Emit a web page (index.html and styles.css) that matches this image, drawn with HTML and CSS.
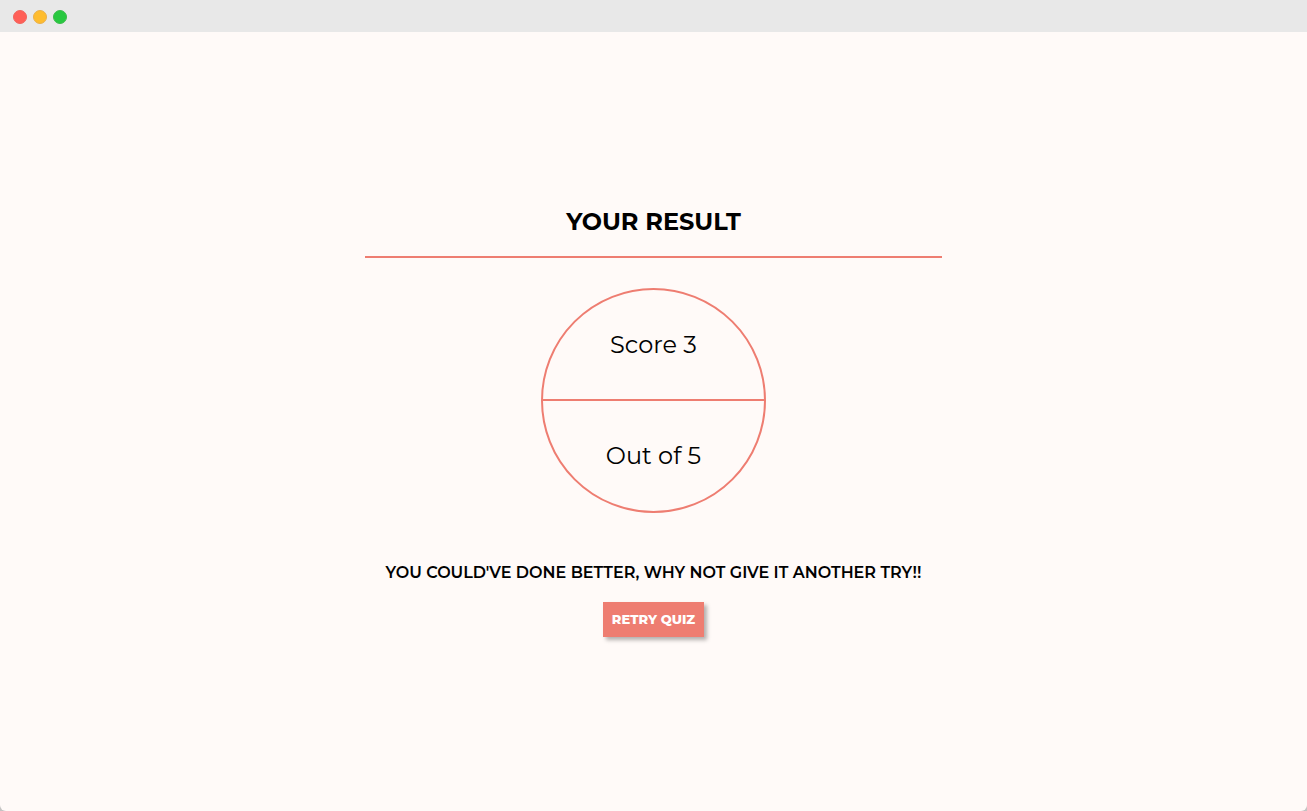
FILE: index.html
```html
<!DOCTYPE html>
<html lang="en">
<head>
<meta charset="utf-8">
<title>Quiz Result</title>
<link rel="stylesheet" href="styles.css">
</head>
<body>
<div class="window">
  <header class="titlebar">
    <span class="dot dot-close"></span>
    <span class="dot dot-minimize"></span>
    <span class="dot dot-zoom"></span>
  </header>
  <main class="content">
    <section class="result">
      <h1 class="title">YOUR RESULT</h1>
      <div class="circle">
        <p class="half half-top">Score 3</p>
        <p class="half">Out of 5</p>
      </div>
      <p class="message">YOU COULD'VE DONE BETTER, WHY NOT GIVE IT ANOTHER TRY!!</p>
      <button class="retry" type="button">RETRY QUIZ</button>
    </section>
  </main>
</div>
</body>
</html>
```
FILE: styles.css
```css
* {
  box-sizing: border-box;
}

body {
  margin: 0;
  background: #c4c3c3;
  color: #000;
  font-family: Montserrat, "Open Sans", sans-serif;
}

.window {
  display: flex;
  flex-direction: column;
  min-height: 100vh;
  overflow: hidden;
  border-radius: 0 0 6px 6px;
  background: #fffaf8;
}

.titlebar {
  display: flex;
  align-items: center;
  gap: 6px;
  height: 32px;
  padding: 2px 13px 0;
  background: #e8e8e8;
}

.dot {
  width: 14px;
  height: 14px;
  border: 1px solid;
  border-radius: 50%;
}

.dot-close {
  background: #ff5f57;
  border-color: #f0645d;
}

.dot-minimize {
  background: #febc2e;
  border-color: #e9b04a;
}

.dot-zoom {
  background: #28c840;
  border-color: #3abb4a;
}

.content {
  display: flex;
  flex: 1;
  align-items: center;
  justify-content: center;
}

.result {
  display: flex;
  flex-direction: column;
  align-items: center;
  padding: 0 0 1px;
}

.title {
  align-self: stretch;
  margin: 0 0 30px;
  padding: 0 20px 18px;
  border-bottom: 2px solid #ee7d71;
  font-size: 24px;
  font-weight: 700;
  line-height: 32px;
  text-align: center;
}

.circle {
  display: flex;
  flex-direction: column;
  width: 225px;
  height: 225px;
  overflow: hidden;
  border: 2px solid #ee7d71;
  border-radius: 50%;
}

.half {
  display: flex;
  flex: 1;
  align-items: center;
  justify-content: center;
  margin: 0;
  font-size: 24px;
  line-height: 30px;
}

.half-top {
  flex: 0 0 111px;
  padding-top: 2px;
  border-bottom: 2px solid #ee7d71;
}

.message {
  margin: 50px 0 19px;
  padding: 0 21px;
  font-size: 16px;
  font-weight: 600;
  line-height: 20px;
}

.retry {
  height: 35px;
  padding: 0 9px;
  border: 0;
  background: #ee7d71;
  box-shadow: 3px 3px 4px rgba(0, 0, 0, 0.3);
  color: #fff;
  font: 800 13px Montserrat, "Open Sans", sans-serif;
}
```
